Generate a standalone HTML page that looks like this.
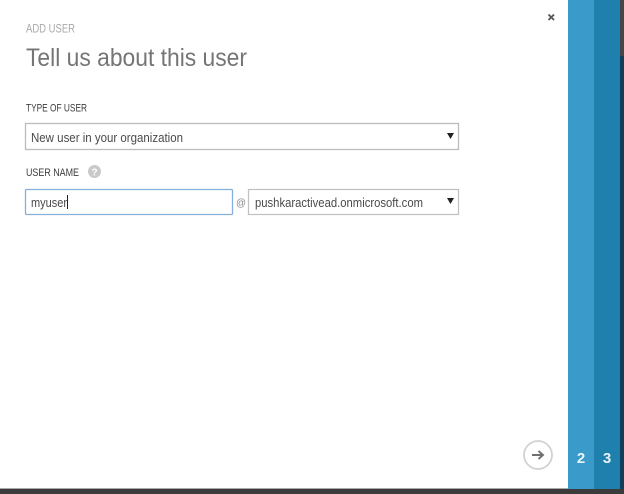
<!DOCTYPE html>
<html><head><meta charset="utf-8"><style>
html,body{margin:0;padding:0;background:#fff;width:624px;height:494px;overflow:hidden}
svg{display:block}
text{font-family:"Liberation Sans",sans-serif}
</style></head><body>
<svg width="624" height="494" viewBox="0 0 624 494" xmlns="http://www.w3.org/2000/svg">
<rect width="624" height="494" fill="#fff"/>
<rect x="568" y="0" width="26" height="489" fill="#3a9bca"/>
<rect x="594" y="0" width="26" height="489" fill="#1f80ae"/>
<rect x="620" y="0" width="4" height="56" fill="#454648"/>
<rect x="620" y="56" width="4" height="433" fill="#113e58"/>
<rect x="0" y="488" width="568" height="1" fill="#aaa"/>
<rect x="0" y="489" width="624" height="5" fill="#3b3b3b"/>
<text x="26" y="32.500" font-size="11.500" fill="#a8a8a8" textLength="49" lengthAdjust="spacingAndGlyphs">ADD USER</text>
<text x="26" y="66" font-size="25" fill="#757575" textLength="221" lengthAdjust="spacingAndGlyphs">Tell us about this user</text>
<text x="26" y="111.500" font-size="11" fill="#3c3c3c" textLength="61" lengthAdjust="spacingAndGlyphs">TYPE OF USER</text>
<rect x="25.500" y="123.500" width="433" height="26" fill="#fff" stroke="#bcbcbc" stroke-width="1.300"/>
<text x="31" y="142" font-size="13" fill="#4a4a4a" textLength="152" lengthAdjust="spacingAndGlyphs">New user in your organization</text>
<path d="M447 133h7l-3.500 6z" fill="#222"/>
<text x="26" y="176" font-size="11" fill="#3c3c3c" textLength="53" lengthAdjust="spacingAndGlyphs">USER NAME</text>
<circle cx="94.500" cy="171.500" r="6.500" fill="#c9c9c9"/>
<text x="94.500" y="175.500" font-size="10" font-weight="700" fill="#fff" text-anchor="middle">?</text>
<rect x="25.500" y="189.500" width="207" height="25" rx="1" fill="#fff" stroke="#86afd9" stroke-width="1.300"/>
<text x="31" y="207" font-size="13" fill="#4a4a4a" textLength="36" lengthAdjust="spacingAndGlyphs">myuser</text>
<rect x="67" y="195" width="1" height="14" fill="#222"/>
<text x="236" y="206" font-size="10" fill="#888" textLength="10" lengthAdjust="spacingAndGlyphs">@</text>
<rect x="248.500" y="189.500" width="210" height="25" fill="#fff" stroke="#c0c0c0" stroke-width="1.200"/>
<text x="255" y="207" font-size="13" fill="#4a4a4a" textLength="168" lengthAdjust="spacingAndGlyphs">pushkaractivead.onmicrosoft.com</text>
<path d="M447 198h7l-3.500 6z" fill="#222"/>
<path d="M548.500 14.500l5.500 5.500M554 14.500l-5.500 5.500" stroke="#555" stroke-width="1.800" fill="none"/>
<circle cx="538" cy="455" r="14" fill="#fff" stroke="#d2d2d2" stroke-width="1.800"/>
<path d="M532 455h11M538.500 451l4.500 4-4.500 4" stroke="#707070" stroke-width="1.900" fill="none"/>
<text x="581" y="463" font-size="15" font-weight="700" fill="#e9f4fa" text-anchor="middle">2</text>
<text x="607" y="463" font-size="15" font-weight="700" fill="#e9f4fa" text-anchor="middle">3</text>
</svg>
</body></html>
